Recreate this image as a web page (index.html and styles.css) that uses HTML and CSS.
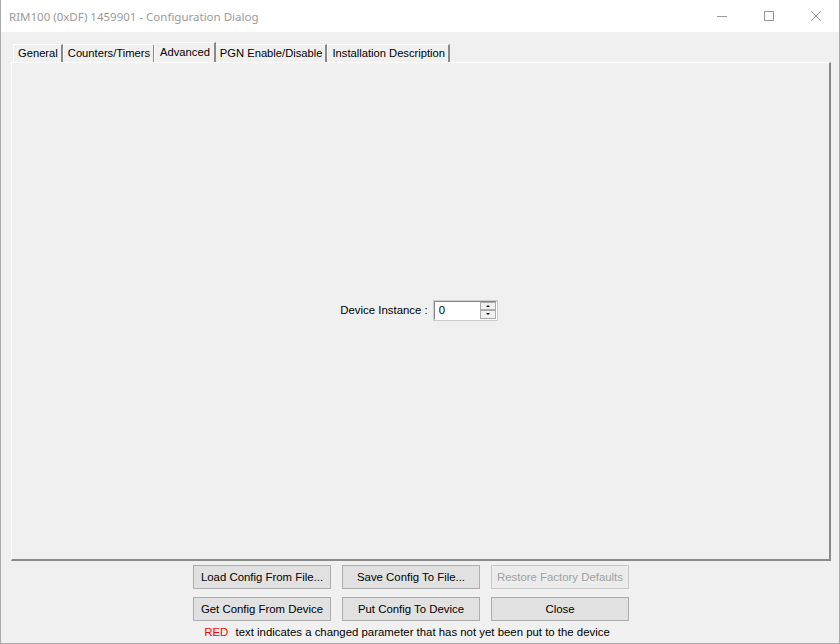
FILE: index.html
```html
<!DOCTYPE html>
<html lang="en">
<head>
  <meta charset="UTF-8" />
  <title>RIM100 (0xDF) 1459901 - Configuration Dialog</title>
  <link rel="stylesheet" href="styles.css">
</head>
<body>
  <div class="window">
    <div class="titlebar">
      <span class="title">RIM100 (0xDF) 1459901 - Configuration Dialog</span>
      <div class="controls">
        <span class="ctl">
          <svg width="12" height="12" viewBox="0 0 12 12"><path d="M1 6.5h10" stroke="#999" stroke-width="1"/></svg>
        </span>
        <span class="ctl">
          <svg width="12" height="12" viewBox="0 0 12 12"><rect x="1.5" y="1.5" width="9" height="9" fill="none" stroke="#999" stroke-width="1"/></svg>
        </span>
        <span class="ctl">
          <svg width="12" height="12" viewBox="0 0 12 12"><path d="M1 1l10 10M11 1L1 11" stroke="#999" stroke-width="1"/></svg>
        </span>
      </div>
    </div>

    <div class="content">
      <div class="tabs">
        <span class="tab">General</span>
        <span class="tab">Counters/Timers</span>
        <span class="tab active">Advanced</span>
        <span class="tab">PGN Enable/Disable</span>
        <span class="tab">Installation Description</span>
      </div>

      <div class="panel">
        <div class="field">
          <label for="instance">Device Instance :</label>
          <div class="spin">
            <input id="instance" type="text" value="0" />
            <div class="spin-btns">
              <span class="arrow up"></span>
              <span class="arrow down"></span>
            </div>
          </div>
        </div>
      </div>

      <div class="buttons">
        <button class="btn">Load Config From File...</button>
        <button class="btn">Save Config To File...</button>
        <button class="btn" disabled>Restore Factory Defaults</button>
        <button class="btn">Get Config From Device</button>
        <button class="btn">Put Config To Device</button>
        <button class="btn">Close</button>
      </div>

      <p class="note"><span class="red">RED</span> text indicates a changed parameter that has not yet been put to the device</p>
    </div>
  </div>
</body>
</html>
```

FILE: styles.css
```css
* {
  box-sizing: border-box;
}

body {
  margin: 0;
  background: #f0f0f0;
  font-family: "Liberation Sans", Arial, sans-serif;
  font-size: 11.4px;
  color: #000;
}

.window {
  width: 840px;
  height: 644px;
  border-left: 1px solid #aaa;
  border-right: 1px solid #aaa;
  border-bottom: 1px solid #aaa;
  display: flex;
  flex-direction: column;
}

.titlebar {
  height: 32px;
  background: #fff;
  display: flex;
  align-items: center;
  justify-content: space-between;
  padding-left: 8px;
}

.title {
  color: #9a9a9a;
  font-family: "Noto Sans", sans-serif;
  font-size: 11.5px;
}

.controls {
  display: flex;
  height: 100%;
}

.ctl {
  width: 47px;
  display: flex;
  align-items: center;
  justify-content: center;
}

.content {
  flex: 1;
  padding: 10px 8px 0 10px;
  display: flex;
  flex-direction: column;
}

.tabs {
  display: flex;
  padding-left: 2px;
  height: 20px;
  align-items: flex-end;
}

.tab {
  height: 18px;
  padding: 0 3px 0 4px;
  border-right: 2px solid #8a8a8a;
  border-top: 1px solid #fff;
  border-left: 1px solid #fff;
  line-height: 17px;
  font-size: 11.2px;
  white-space: nowrap;
}

.tab.active {
  height: 20px;
  padding: 0 4px 0 5px;
  margin: 0 -1px;
  background: #f0f0f0;
  position: relative;
  z-index: 1;
  line-height: 18px;
}

.panel {
  height: 499px;
  border-top: 1px solid #fff;
  border-left: 1px solid #fff;
  border-right: 2px solid #8a8a8a;
  border-bottom: 2px solid #8a8a8a;
  display: flex;
  align-items: center;
  justify-content: center;
}

.field {
  display: flex;
  align-items: center;
  gap: 6px;
  margin-top: -2px;
  margin-right: 4px;
}

.spin {
  display: flex;
  width: 63px;
  height: 19px;
  border-top: 1px solid #888;
  border-left: 1px solid #888;
  border-right: 1px solid #fff;
  border-bottom: 1px solid #fff;
  background: #fff;
  outline: 1px solid #ccc;
}

.spin input {
  width: 45px;
  border: none;
  padding: 0 4px;
  font: inherit;
  outline: none;
}

.spin-btns {
  flex: 1;
  display: flex;
  flex-direction: column;
  background: #f0f0f0;
}

.arrow {
  flex: 1;
  border: 1px solid #aaa;
  display: flex;
  align-items: center;
  justify-content: center;
}

.arrow::after {
  content: "";
  border-left: 2px solid transparent;
  border-right: 2px solid transparent;
}

.arrow.up::after {
  border-bottom: 2px solid #000;
}

.arrow.down::after {
  border-top: 2px solid #000;
}

.buttons {
  display: grid;
  grid-template-columns: repeat(3, 138px);
  column-gap: 11px;
  row-gap: 8px;
  justify-content: center;
  margin-top: 4px;
  margin-right: 20px;
}

.btn {
  height: 24px;
  background: #e1e1e1;
  border: 1px solid #adadad;
  font-family: inherit;
  font-size: 11.4px;
  color: #000;
  padding: 0;
  white-space: nowrap;
}

.btn:disabled {
  color: #a0a0a0;
  background: #ececec;
  border-color: #c8c8c8;
}

.note {
  margin: 5px 0 0;
  text-align: center;
  padding-right: 28px;
}

.red {
  color: #ff0000;
  margin-right: 4px;
}
```
